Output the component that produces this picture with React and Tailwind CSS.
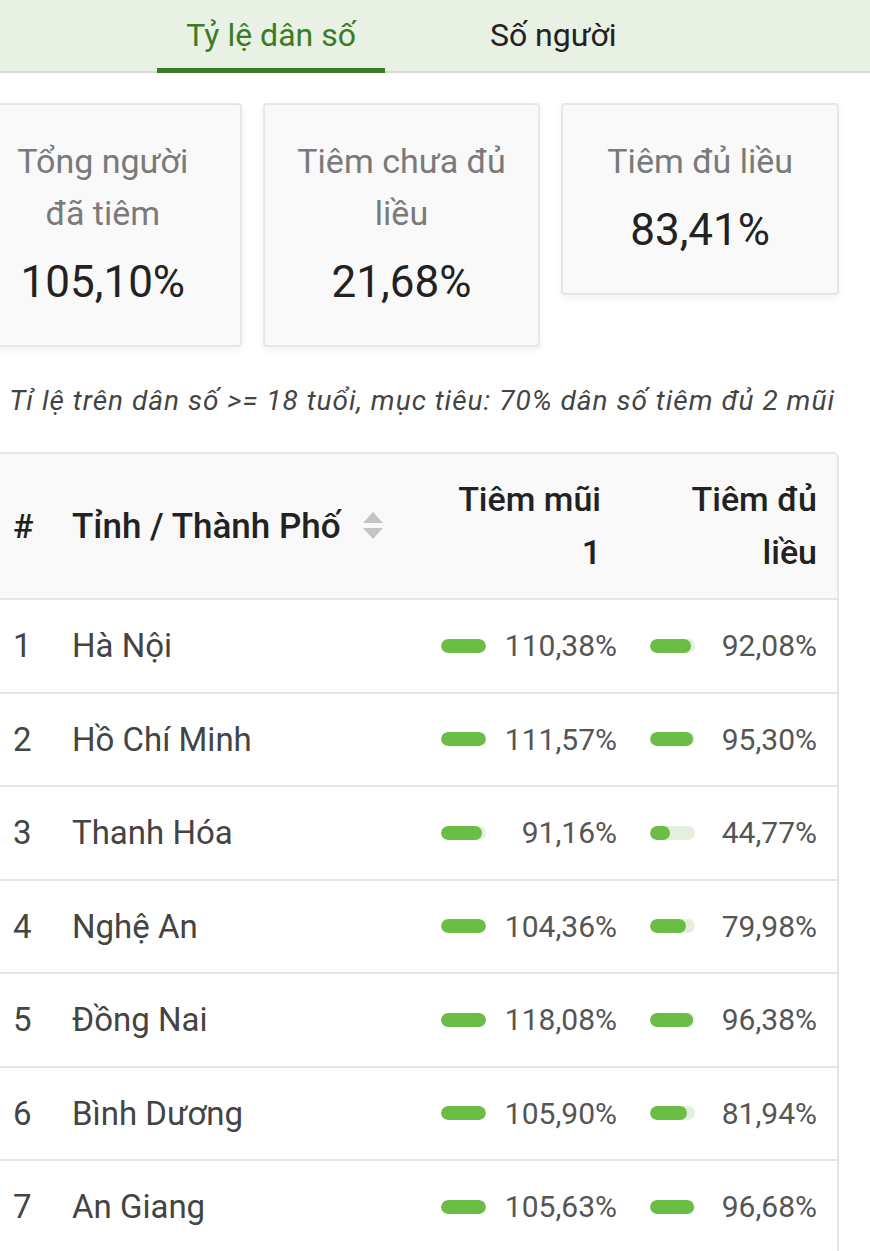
import { useState } from "react";

const rows = [
  { id: 1, name: "Hà Nội", dose1: 110.38, full: 92.08 },
  { id: 2, name: "Hồ Chí Minh", dose1: 111.57, full: 95.3 },
  { id: 3, name: "Thanh Hóa", dose1: 91.16, full: 44.77 },
  { id: 4, name: "Nghệ An", dose1: 104.36, full: 79.98 },
  { id: 5, name: "Đồng Nai", dose1: 118.08, full: 96.38 },
  { id: 6, name: "Bình Dương", dose1: 105.9, full: 81.94 },
  { id: 7, name: "An Giang", dose1: 105.63, full: 96.68 },
];

const fmt = (n) => n.toFixed(2).replace(".", ",") + "%";

function Bar({ value }) {
  return (
    <div className="h-[14px] w-[45px] rounded-full bg-[#e5efdf] overflow-hidden">
      <div
        className="h-full rounded-full bg-[#6cbd45]"
        style={{ width: `${Math.min(value, 100)}%` }}
      />
    </div>
  );
}

function StatCard({ label, value }) {
  return (
    <div className="rounded-[4px] border-2 border-[#e7e7e7] bg-[#f9f9f9] pt-[30px] pb-[33px] px-2 text-center shadow-[0_3px_8px_rgba(0,0,0,0.06)]">
      <div className="text-[34px] leading-[52px] text-[#7a7a7a]">{label}</div>
      <div className="mt-[13px] text-[44px] leading-[60px] text-[#222]">{value}</div>
    </div>
  );
}

export default function App() {
  const [tab, setTab] = useState(0);

  return (
    <div className="w-[870px] min-h-[1251px] overflow-hidden bg-white font-['Roboto','Liberation_Sans',sans-serif]">
      {/* tabs */}
      <div className="h-[73px] bg-[#e8f1e4] border-b-2 border-[#d7dbd5]">
        <div className="ml-[-36px] w-[875px] h-full flex justify-center gap-[76px]">
          <button
            onClick={() => setTab(0)}
            className={`h-[73px] px-[29px] pt-[1px] text-[32px] border-b-[5px] ${
              tab === 0 ? "border-[#3b7b25] text-[#3b7b25]" : "border-transparent text-[#222]"
            }`}
          >
            Tỷ lệ dân số
          </button>
          <button
            onClick={() => setTab(1)}
            className={`h-[73px] px-[29px] pt-[1px] text-[32px] border-b-[5px] ${
              tab === 1 ? "border-[#3b7b25] text-[#3b7b25]" : "border-transparent text-[#222]"
            }`}
          >
            Số người
          </button>
        </div>
      </div>

      <div className="ml-[-36px] w-[875px]">
        {/* cards */}
        <div className="mt-[30px] grid grid-cols-3 gap-[21px] items-start">
          <StatCard label={<>Tổng người<br />đã tiêm</>} value="105,10%" />
          <StatCard label={<>Tiêm chưa đủ<br />liều</>} value="21,68%" />
          <StatCard label="Tiêm đủ liều" value="83,41%" />
        </div>

        {/* note */}
        <p className="mt-[36px] whitespace-nowrap text-right pr-[4px] text-[28px] tracking-[1px] leading-[36px] italic text-[#444]">
          (*) Tỉ lệ trên dân số &gt;= 18 tuổi, mục tiêu: 70% dân số tiêm đủ 2 mũi
        </p>

        {/* table */}
        <div className="mt-[33px] border-2 border-[#e6e6e6] rounded-tr-[6px] overflow-hidden">
          <div className="flex items-center h-[146px] pl-[47px] pr-[20px] bg-[#f9f9f9] border-b-2 border-[#e6e6e6] font-medium text-[34px] leading-[53px] text-[#222]">
            <div className="w-[59px]">#</div>
            <div className="flex-1 flex items-center">
              <span className="text-[35px]">Tỉnh / Thành Phố</span>
              <svg className="ml-[22px]" width="20" height="28" viewBox="0 0 20 28">
                <polygon points="10,0 20,11 0,11" fill="#c4c4c4" />
                <polygon points="0,16 20,16 10,27" fill="#c4c4c4" />
              </svg>
            </div>
            <div className="w-[176px] pr-[16px] text-right">
              Tiêm mũi
              <br />1
            </div>
            <div className="w-[167px] ml-[33px] text-right">
              Tiêm đủ
              <br />
              liều
            </div>
          </div>

          {rows.map((r) => (
            <div
              key={r.id}
              className="flex items-center h-[93.5px] pl-[47px] pr-[20px] border-b-2 border-[#e6e6e6] text-[#444]"
            >
              <div className="w-[59px] text-[33px]">{r.id}</div>
              <div className="flex-1 text-[33px]">{r.name}</div>
              <div className="w-[176px] flex items-center justify-between">
                <Bar value={r.dose1} />
                <span className="text-[30px] text-[#555]">{fmt(r.dose1)}</span>
              </div>
              <div className="w-[167px] ml-[33px] flex items-center justify-between">
                <Bar value={r.full} />
                <span className="text-[30px] text-[#555]">{fmt(r.full)}</span>
              </div>
            </div>
          ))}
        </div>
      </div>
    </div>
  );
}
